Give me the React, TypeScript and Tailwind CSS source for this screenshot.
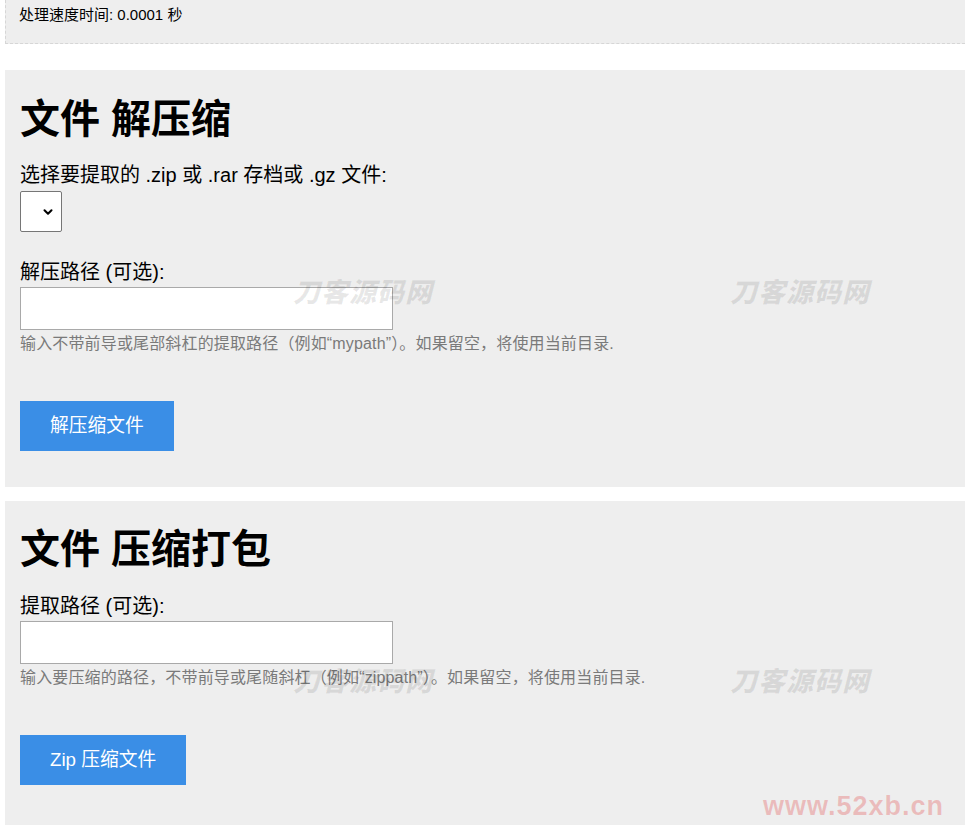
import { ChevronDown } from "lucide-react";

const font = { fontFamily: '"Liberation Sans", Arial, "Noto Sans CJK SC", sans-serif' };

function Watermark({ className }: { className: string }) {
  return (
    <span
      className={`pointer-events-none absolute select-none whitespace-nowrap text-[27px] font-black italic leading-none tracking-[1px] text-[rgba(0,0,0,0.09)] ${className}`}
    >
      刀客源码网
    </span>
  );
}

function PathField({
  label,
  hint,
}: {
  label: string;
  hint: string;
}) {
  return (
    <div className="flex flex-col">
      <label className="text-[20px] leading-[24px] text-black">{label}</label>
      <input
        type="text"
        className="mt-[3px] h-[43px] w-[373px] border border-[#a9a9a9] bg-white px-2 text-[18px] outline-none"
      />
      <p className="mt-[4px] text-[16px] leading-[20px] tracking-[0.15px] text-[#7a7a7a]">{hint}</p>
    </div>
  );
}

export default function App() {
  return (
    <div className="relative min-h-[831px] overflow-hidden bg-white" style={font}>
      {/* status bar */}
      <div className="ml-[5px] flex h-[44px] items-start border-b border-l border-dashed border-[#d6d6d6] bg-[#eeeeee] pl-[13px] pt-[5px]">
        <span className="text-[15px] leading-[20px] text-black">处理速度时间: 0.0001 秒</span>
      </div>

      {/* extract */}
      <section className="ml-[5px] mt-[26px] bg-[#eeeeee] px-[15px] pb-[36px] pt-[25px]">
        <h1 className="text-[40px] font-bold leading-[48px] text-black">文件 解压缩</h1>
        <label className="mt-[20px] block text-[20px] leading-[24px] text-black">
          选择要提取的 .zip 或 .rar 存档或 .gz 文件:
        </label>
        <div className="mt-[4px] flex h-[41px] w-[42px] items-center justify-end rounded-[2px] border border-[#767676] bg-white pr-[6px]">
          <ChevronDown className="h-[14px] w-[14px] text-black" strokeWidth={3.5} />
        </div>
        <div className="mt-[28px]">
          <PathField
            label="解压路径 (可选):"
            hint="输入不带前导或尾部斜杠的提取路径（例如“mypath”）。如果留空，将使用当前目录."
          />
        </div>
        <button className="mt-[47px] h-[50px] bg-[#3a8ee6] px-[30px] text-[18.75px] text-white">
          解压缩文件
        </button>
      </section>

      {/* compress */}
      <section className="ml-[5px] mt-[14px] bg-[#eeeeee] px-[15px] pb-[40px] pt-[24px]">
        <h1 className="text-[40px] font-bold leading-[48px] text-black">文件 压缩打包</h1>
        <div className="mt-[21px]">
          <PathField
            label="提取路径 (可选):"
            hint="输入要压缩的路径，不带前导或尾随斜杠（例如“zippath”）。如果留空，将使用当前目录."
          />
        </div>
        <button className="mt-[47px] h-[50px] bg-[#3a8ee6] px-[30px] text-[18.75px] text-white">
          Zip 压缩文件
        </button>
      </section>

      <Watermark className="left-[293px] top-[280px]" />
      <Watermark className="left-[730px] top-[280px]" />
      <Watermark className="left-[293px] top-[669px]" />
      <Watermark className="left-[730px] top-[669px]" />
      <span className="pointer-events-none absolute left-[763px] top-[793px] select-none text-[27px] font-bold leading-none tracking-[1px] text-[rgba(225,60,60,0.28)]">
        www.52xb.cn
      </span>
    </div>
  );
}
